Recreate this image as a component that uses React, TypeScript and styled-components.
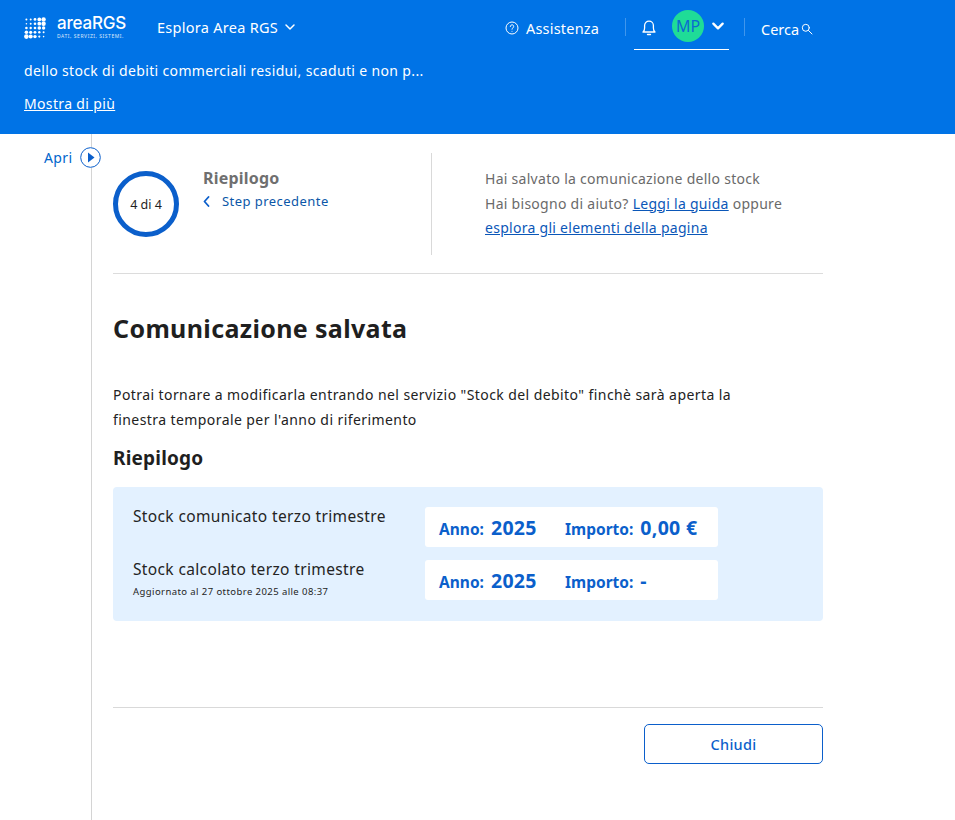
import React from "react";
import styled, { createGlobalStyle } from "styled-components";

const Global = createGlobalStyle`
  html, body { margin: 0; padding: 0; background: #fff; }
  body { font-family: "Noto Sans", "Open Sans", sans-serif; color: #1f1f1f; }
  * { box-sizing: border-box; }
`;

const Page = styled.div`
  width: 955px;
  height: 820px;
  overflow: hidden;
  display: flex;
  flex-direction: column;
`;
const Header = styled.header`
  height: 134px;
  background: #0073e6;
  color: #fff;
  flex: none;
`;
const TopBar = styled.div`
  height: 56px;
  display: flex;
  align-items: center;
  padding-left: 24px;
`;
const Logo = styled.div`
  display: flex;
  align-items: center;
  gap: 11px;
  width: 133px;
`;
const LogoText = styled.div`
  display: flex;
  flex-direction: column;
`;
const LogoName = styled.span`
  font-family: Inter, sans-serif;
  font-size: 17px;
  line-height: 15px;
  font-weight: 500;
  letter-spacing: -0.2px;
`;
const LogoTag = styled.span`
  font-family: "Noto Sans", sans-serif;
  font-size: 5px;
  line-height: 8px;
  letter-spacing: 0.55px;
  white-space: nowrap;
  margin-top: 1px;
  opacity: .85;
`;
const NavMain = styled.div`
  font-size: 14.5px;
  letter-spacing: 0.28px;
  display: flex;
  align-items: center;
  gap: 6px;
  width: 348px;
  margin-top: -3px;
`;
const Help = styled.div`
  font-size: 14.5px;
  letter-spacing: 0.2px;
  display: flex;
  align-items: center;
  gap: 7px;
  width: 120px;
  margin-top: -1px;
`;
const Sep = styled.span`
  width: 1px;
  height: 18px;
  background: rgba(255,255,255,.25);
  margin-top: -2px;
`;
const Bell = styled.span`
  display: flex;
  margin: -2px 0 0 16px;
`;
const UserWrap = styled.div`
  position: relative;
  display: flex;
  align-items: center;
  gap: 7px;
  margin: -4px 19px 0 16px;
`;
const Avatar = styled.span`
  width: 32px;
  height: 32px;
  border-radius: 50%;
  background: #1fdc97;
  color: #0b6bd0;
  font-size: 16px;
  display: flex;
  align-items: center;
  justify-content: center;
`;
const Underline = styled.span`
  position: absolute;
  left: -38px;
  top: 39px;
  width: 95px;
  height: 1px;
  background: #fff;
`;
const Search = styled.div`
  font-size: 14.5px;
  display: flex;
  align-items: center;
  gap: 2px;
  margin-left: 16px;
  margin-top: 2px;
`;
const Notice = styled.p`
  margin: 5px 0 0 24px;
  font-size: 14px;
  line-height: 20px;
  letter-spacing: 0.35px;
`;
const More = styled.a`
  display: block;
  margin: 13px 0 0 24px;
  font-size: 14px;
  line-height: 20px;
  letter-spacing: 0.35px;
  color: #fff;
  text-decoration: underline;
`;
const Body = styled.div`
  flex: 1;
  display: flex;
`;
const Side = styled.aside`
  width: 92px;
  flex: none;
  border-right: 1px solid #d4d4d4;
  position: relative;
`;
const OpenBtn = styled.div`
  position: absolute;
  top: 13px;
  left: 44px;
  display: flex;
  align-items: center;
  gap: 7px;
  color: #0066cc;
  font-size: 14px;
  letter-spacing: 0.4px;
`;
const OpenIcon = styled.span`
  display: flex;
  background: #fff;
  border-radius: 50%;
`;
const Main = styled.main`
  width: 710px;
  margin-left: 21px;
  display: flex;
  flex-direction: column;
`;
const StepHead = styled.section`
  height: 140px;
  border-bottom: 1px solid #dcdcdc;
  display: flex;
  align-items: flex-start;
  padding-top: 19px;
`;
const Progress = styled.div`
  width: 66px;
  height: 66px;
  margin-top: 18px;
  border-radius: 50%;
  border: 5px solid #0b5fcb;
  display: flex;
  align-items: center;
  justify-content: center;
  font-size: 12.5px;
  flex: none;
`;
const StepInfo = styled.div`
  width: 229px;
  margin-left: 24px;
  height: 102px;
  padding-top: 14px;
  border-right: 1px solid #d9d9d9;
`;
const StepTitle = styled.div`
  font-size: 16px;
  line-height: 22px;
  font-weight: 700;
  color: #6f6f6f;
  letter-spacing: 0.2px;
`;
const StepBack = styled.div`
  display: flex;
  align-items: center;
  gap: 12px;
  margin-top: 3px;
  font-size: 13px;
  line-height: 18px;
  letter-spacing: 0.45px;
  color: #0b57a8;
`;
const StepHelp = styled.div`
  margin-left: 53px;
  padding-top: 14px;
  font-size: 14px;
  line-height: 24.5px;
  letter-spacing: 0.28px;
  color: #6a6a6a;
`;
const TextLink = styled.a`
  color: #0b57b8;
  text-decoration: underline;
`;
const Title = styled.h1`
  margin: 37px 0 0;
  font-size: 25px;
  line-height: 34px;
  font-weight: 700;
  letter-spacing: 0.35px;
  color: #1f1f1f;
`;
const Lead = styled.p`
  margin: 37px 0 0;
  font-size: 14px;
  line-height: 25px;
  letter-spacing: 0.42px;
  color: #222;
`;
const SubTitle = styled.h2`
  margin: 13px 0 0;
  font-size: 19px;
  line-height: 26px;
  font-weight: 700;
  letter-spacing: 0.2px;
`;
const SummaryBox = styled.section`
  margin-top: 16px;
  height: 134px;
  background: #e3f1ff;
  border-radius: 4px;
  padding: 20px;
  display: grid;
  grid-template-columns: 292px 293px;
  grid-auto-rows: 40px;
  row-gap: 13px;
`;
const RowLabel = styled.div`
  font-size: 15.5px;
  line-height: 22px;
  letter-spacing: 0.36px;
  color: #242424;
  white-space: nowrap;
  margin-top: -2px;
`;
const Updated = styled.div`
  font-size: 9.5px;
  line-height: 13px;
  letter-spacing: 0.42px;
  margin-top: 5px;
`;
const ValueCard = styled.div`
  background: #fff;
  border-radius: 3px;
  display: flex;
  align-items: center;
  padding-left: 14px;
  color: #0b5fcb;
  font-weight: 700;
`;
const Field = styled.span<{ $w: number }>`
  display: flex;
  align-items: baseline;
  gap: 7px;
  width: ${(p) => p.$w}px;
  white-space: nowrap;
`;
const FieldLabel = styled.span`
  font-size: 15.5px;
`;
const FieldValue = styled.span`
  font-size: 19.5px;
  letter-spacing: 0.3px;
`;
const Footer = styled.footer`
  margin-top: 86px;
  border-top: 1px solid #d9d9d9;
  padding-top: 16px;
  display: flex;
  justify-content: flex-end;
`;
const CloseBtn = styled.button`
  width: 179px;
  height: 40px;
  background: #fff;
  border: 1px solid #0b5fcb;
  border-radius: 5px;
  color: #0b5fcb;
  font: 500 14.5px "Noto Sans", sans-serif;
  letter-spacing: 0.3px;
`;

const LogoDots = () => {
  const rows = [
    [1, 1, 1.4, 1.9, 2.2],
    [0.8, 1, 1.3, 1.9, 2.2],
    [1.3, 1.2, 1.3, 1.8, 1.7],
    [1.8, 1.6, 1.4, 1.2, 1],
    [2.3, 2, 1.7, 1.1, 0.8],
  ];
  return (
    <svg width="22" height="22" viewBox="0 0 22 22" fill="#fff">
      {rows.flatMap((r, y) =>
        r.map((s, x) => <circle key={`${x}-${y}`} cx={2.4 + x * 4.3} cy={2.4 + y * 4.3} r={s} />)
      )}
    </svg>
  );
};

const Chevron = ({ w = 12, c = "#fff", sw = 1.5 }: { w?: number; c?: string; sw?: number }) => (
  <svg width={w} height={w} viewBox="0 0 12 12" fill="none" stroke={c} strokeWidth={sw} strokeLinecap="round" strokeLinejoin="round">
    <path d="M2 4l4 4 4-4" />
  </svg>
);

const Row = ({ label, updated, value }: { label: string; updated?: string; value: string }) => (
  <>
    <RowLabel>
      {label}
      {updated && <Updated>{updated}</Updated>}
    </RowLabel>
    <ValueCard>
      <Field $w={126}>
        <FieldLabel>Anno:</FieldLabel>
        <FieldValue>2025</FieldValue>
      </Field>
      <Field $w={150}>
        <FieldLabel>Importo:</FieldLabel>
        <FieldValue>{value}</FieldValue>
      </Field>
    </ValueCard>
  </>
);

export default function App() {
  return (
    <Page>
      <Global />
      <Header>
        <TopBar>
          <Logo>
            <LogoDots />
            <LogoText>
              <LogoName>areaRGS</LogoName>
              <LogoTag>DATI, SERVIZI, SISTEMI.</LogoTag>
            </LogoText>
          </Logo>
          <NavMain>
            Esplora Area RGS <Chevron />
          </NavMain>
          <Help>
            <svg width="14" height="14" viewBox="0 0 14 14" fill="none" stroke="#fff" strokeWidth="1">
              <circle cx="7" cy="7" r="6" />
              <path d="M5.3 5.5a1.7 1.7 0 1 1 2.6 1.4c-.6.4-.9.7-.9 1.3" strokeLinecap="round" />
              <circle cx="7" cy="10.2" r=".5" fill="#fff" stroke="none" />
            </svg>
            Assistenza
          </Help>
          <Sep />
          <Bell>
            <svg width="14" height="17" viewBox="0 0 14 17" fill="none" stroke="#fff" strokeWidth="1.3" strokeLinejoin="round">
              <path d="M1 13h12c-1.2-1-1.6-2.200-1.600-4V6.500a4.400 4.400 0 0 0-8.800 0V9c0 1.800-.4 3-1.600 4z" />
              <path d="M5.500 15.500h3" strokeLinecap="round" />
            </svg>
          </Bell>
          <UserWrap>
            <Avatar>MP</Avatar>
            <Chevron w={14} sw={2} />
            <Underline />
          </UserWrap>
          <Sep />
          <Search>
            Cerca
            <svg width="12" height="12" viewBox="0 0 12 12" fill="none" stroke="#fff" strokeWidth="1" strokeLinecap="round">
              <circle cx="4.800" cy="4.800" r="3.500" />
              <path d="M7.500 7.500l3.500 3.500" />
            </svg>
          </Search>
        </TopBar>
        <Notice>dello stock di debiti commerciali residui, scaduti e non p...</Notice>
        <More>Mostra di più</More>
      </Header>
      <Body>
        <Side>
          <OpenBtn>
            Apri
            <OpenIcon>
              <svg width="21" height="21" viewBox="0 0 21 21">
                <circle cx="10.500" cy="10.500" r="9.800" fill="#fff" stroke="#0b5fcb" strokeWidth="1" />
                <path d="M8 5.500l6.500 5-6.500 5z" fill="#0b5fcb" />
              </svg>
            </OpenIcon>
          </OpenBtn>
        </Side>
        <Main>
          <StepHead>
            <Progress>4 di 4</Progress>
            <StepInfo>
              <StepTitle>Riepilogo</StepTitle>
              <StepBack>
                <svg width="7" height="11" viewBox="0 0 7 11" fill="none" stroke="#0b5fcb" strokeWidth="1.800" strokeLinecap="round" strokeLinejoin="round">
                  <path d="M5.500 1L1.500 5.500l4 4.500" />
                </svg>
                Step precedente
              </StepBack>
            </StepInfo>
            <StepHelp>
              Hai salvato la comunicazione dello stock
              <br />
              Hai bisogno di aiuto? <TextLink>Leggi la guida</TextLink> oppure
              <br />
              <TextLink>esplora gli elementi della pagina</TextLink>
            </StepHelp>
          </StepHead>
          <Title>Comunicazione salvata</Title>
          <Lead>
            Potrai tornare a modificarla entrando nel servizio "Stock del debito" finchè sarà aperta la
            <br />
            finestra temporale per l'anno di riferimento
          </Lead>
          <SubTitle>Riepilogo</SubTitle>
          <SummaryBox>
            <Row label="Stock comunicato terzo trimestre" value="0,00 €" />
            <Row label="Stock calcolato terzo trimestre" updated="Aggiornato al 27 ottobre 2025 alle 08:37" value="-" />
          </SummaryBox>
          <Footer>
            <CloseBtn>Chiudi</CloseBtn>
          </Footer>
        </Main>
      </Body>
    </Page>
  );
}
